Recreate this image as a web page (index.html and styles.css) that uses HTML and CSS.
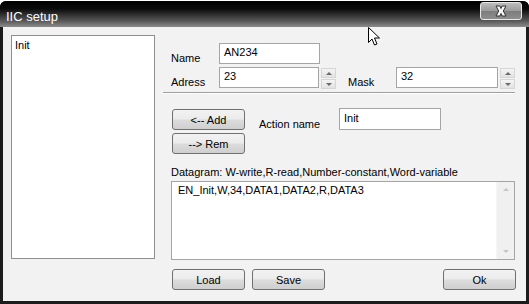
FILE: index.html
```html
<!DOCTYPE html>
<html lang="en">
<head>
  <meta charset="UTF-8" />
  <title>IIC setup</title>
  <link rel="stylesheet" href="styles.css">
</head>
<body>
  <div class="window">
    <div class="titlebar">
      <span class="title">IIC setup</span>
      <div class="close">
        <svg width="20" height="12" viewBox="0 0 20 12">
          <path d="M5 1 L9 1 L10 3.5 L11 1 L15 1 L12.3 6 L15 11 L11 11 L10 8.5 L9 11 L5 11 L7.7 6 Z" fill="#f4f4f4" stroke="#333" stroke-width="1"/>
        </svg>
      </div>
    </div>

    <div class="client">
      <div class="actions-list">
        <div class="list-item">Init</div>
      </div>

      <div class="panel">
        <div class="row row-name">
          <label class="lbl">Name</label>
          <div class="field field-name">AN234</div>
        </div>

        <div class="row row-addr">
          <label class="lbl">Adress</label>
          <div class="field field-addr">23</div>
          <div class="spin">
            <div class="spin-btn"><span class="tri-up"></span></div>
            <div class="spin-btn"><span class="tri-down"></span></div>
          </div>
          <label class="lbl lbl-mask">Mask</label>
          <div class="field field-mask">32</div>
          <div class="spin">
            <div class="spin-btn"><span class="tri-up"></span></div>
            <div class="spin-btn"><span class="tri-down"></span></div>
          </div>
        </div>

        <div class="separator"></div>

        <div class="action-block">
          <div class="btn-stack">
            <button class="btn">&lt;-- Add</button>
            <button class="btn">--&gt; Rem</button>
          </div>
          <label class="lbl lbl-action">Action name</label>
          <div class="field field-action">Init</div>
        </div>

        <div class="hint">Datagram: W-write,R-read,Number-constant,Word-variable</div>

        <div class="datagram">
          <div class="datagram-text">EN_Init,W,34,DATA1,DATA2,R,DATA3</div>
          <div class="scrollbar">
            <span class="tri-up light"></span>
            <span class="tri-down light"></span>
          </div>
        </div>

        <div class="bottom-row">
          <button class="btn">Load</button>
          <button class="btn">Save</button>
          <button class="btn btn-ok">Ok</button>
        </div>
      </div>
    </div>
  </div>

  <svg class="cursor" width="14" height="20" viewBox="0 0 14 20">
    <path d="M0.5 0.5 L0.5 15.5 L4 12 L6.5 18 L9 17 L6.5 11 L11.5 11 Z" fill="#fff" stroke="#000" stroke-width="1"/>
  </svg>
</body>
</html>
```

FILE: styles.css
```css
body, html {
  margin: 0;
  padding: 0;
  background: #fff;
  font-family: 'Liberation Sans', Arial, sans-serif;
  font-size: 11px;
  color: #000;
}
.window {
  width: 529px;
  height: 303px;
  margin-top: 1px;
  background: #1c1c1c;
  border-radius: 6px 6px 0 0;
  display: flex;
  flex-direction: column;
  overflow: hidden;
}
.titlebar {
  height: 26px;
  background: linear-gradient(#000 0%, #0a0a0a 30%, #555 75%, #8c8c8c 100%);
  display: flex;
  align-items: center;
  position: relative;
}
.title {
  color: #fff;
  font-size: 13px;
  margin-left: 6px;
  margin-top: 5px;
}
.close {
  position: absolute;
  right: 7px;
  top: 1px;
  width: 40px;
  height: 16px;
  border: 1px solid #e8e8e8;
  border-radius: 3px;
  background: linear-gradient(#bdbdbd, #9a9a9a 50%, #7c7c7c 51%, #8e8e8e);
  display: flex;
  align-items: center;
  justify-content: center;
}
.client {
  flex: 1;
  margin: 0 3px 3px 3px;
  background: #f2f2f2;
  display: flex;
  padding: 8px 10px 0 8px;
}
.actions-list {
  width: 142px;
  height: 222px;
  border: 1px solid #8e8e8e;
  background: #fff;
}
.list-item {
  padding: 3px 3px;
}
.panel {
  width: 352px;
  margin-left: 8px;
  display: flex;
  flex-direction: column;
}
.row {
  display: flex;
  align-items: flex-start;
  padding-left: 8px;
}
.row-name { margin-top: 8px; }
.row-addr { margin-top: 3px; }
.lbl {
  width: 48px;
  padding-top: 9px;
}
.lbl-mask {
  margin-left: 12px;
}
.field {
  height: 19px;
  line-height: 17px;
  border: 1px solid #a5a5a5;
  background: #fff;
  padding-left: 4px;
  box-sizing: content-box;
}
.field-name { width: 95px; }
.field-addr { width: 94px; }
.field-mask { width: 96px; }
.spin {
  margin-left: 2px;
  margin-top: 1px;
  display: flex;
  flex-direction: column;
  gap: 1px;
}
.spin-btn {
  width: 13px;
  height: 8px;
  border: 1px solid #d6d6d6;
  background: linear-gradient(#f4f4f4, #e2e2e2);
  display: flex;
  align-items: center;
  justify-content: center;
}
.tri-up, .tri-down {
  width: 0;
  height: 0;
  border-left: 3px solid transparent;
  border-right: 3px solid transparent;
}
.tri-up { border-bottom: 3px solid #6a6a6a; }
.tri-down { border-top: 3px solid #6a6a6a; }
.tri-up.light { border-bottom-color: #c4c4c4; }
.tri-down.light { border-top-color: #c4c4c4; }
.separator {
  margin-top: 3px;
  height: 0;
  border-top: 1px solid #a0a0a0;
  border-bottom: 1px solid #fff;
}
.action-block {
  display: flex;
  align-items: flex-start;
  padding-left: 9px;
  margin-top: 14px;
}
.btn-stack {
  display: flex;
  flex-direction: column;
  gap: 3px;
  margin-top: 1px;
}
.btn {
  width: 73px;
  height: 21px;
  border: 1px solid #707070;
  border-radius: 3px;
  background: linear-gradient(#f2f2f2 0%, #ebebeb 48%, #dcdcdc 52%, #cfcfcf 100%);
  font-family: 'Liberation Sans', Arial, sans-serif;
  font-size: 11px;
  color: #000;
  padding: 0;
}
.lbl-action {
  width: 80px;
  margin-left: 14px;
  padding-top: 10px;
}
.field-action {
  width: 96px;
  height: 20px;
  line-height: 18px;
}
.hint {
  margin-top: 12px;
  padding-left: 8px;
  height: 14px;
}
.datagram {
  margin-left: 8px;
  margin-top: 1px;
  height: 77px;
  border: 1px solid #a5a5a5;
  background: #fff;
  display: flex;
}
.datagram-text {
  flex: 1;
  padding: 2px 6px;
}
.scrollbar {
  width: 17px;
  background: #f0f0f0;
  border-left: 1px solid #f6f6f6;
  display: flex;
  flex-direction: column;
  justify-content: space-between;
  align-items: center;
  padding: 6px 0;
}
.bottom-row {
  display: flex;
  gap: 7px;
  padding-left: 9px;
  margin-top: 9px;
}
.btn-ok {
  margin-left: auto;
  margin-right: -1px;
}
.cursor {
  position: absolute;
  left: 368px;
  top: 27px;
}
```
